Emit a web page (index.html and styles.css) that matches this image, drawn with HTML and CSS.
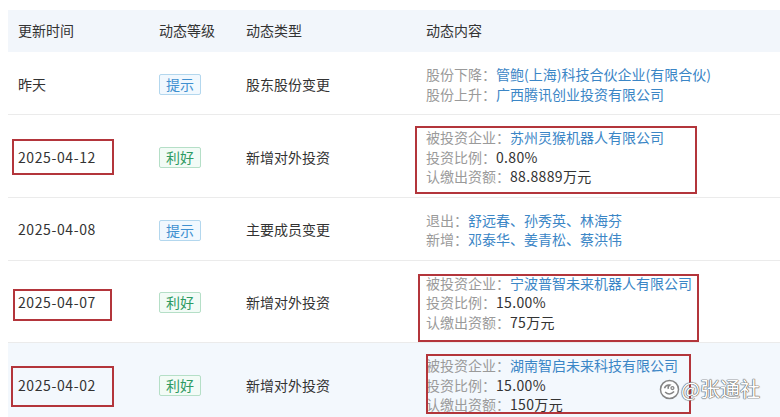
FILE: index.html
```html
<!DOCTYPE html>
<html lang="zh-CN">
<head>
<meta charset="utf-8">
<title>动态</title>
<link rel="stylesheet" href="styles.css">
</head>
<body>
<div class="table">
  <div class="row head">
    <div class="c">更新时间</div>
    <div class="c">动态等级</div>
    <div class="c">动态类型</div>
    <div class="c">动态内容</div>
  </div>

  <div class="row">
    <div class="c mid">昨天</div>
    <div class="c mid"><span class="tag tip">提示</span></div>
    <div class="c mid">股东股份变更</div>
    <div class="c">
      <div class="ln"><span class="lb">股份下降：</span><span class="lk">管鲍(上海)科技合伙企业(有限合伙)</span></div>
      <div class="ln"><span class="lb">股份上升：</span><span class="lk">广西腾讯创业投资有限公司</span></div>
    </div>
  </div>

  <div class="row">
    <div class="c mid"><span class="date mk mk1">2025-04-12</span></div>
    <div class="c mid"><span class="tag good">利好</span></div>
    <div class="c mid">新增对外投资</div>
    <div class="c">
      <div class="box bx1">
        <div class="ln"><span class="lb">被投资企业：</span><span class="lk">苏州灵猴机器人有限公司</span></div>
        <div class="ln"><span class="lb">投资比例：</span><span class="vl">0.80%</span></div>
        <div class="ln"><span class="lb">认缴出资额：</span><span class="vl">88.8889万元</span></div>
      </div>
    </div>
  </div>

  <div class="row">
    <div class="c mid"><span class="date">2025-04-08</span></div>
    <div class="c mid"><span class="tag tip">提示</span></div>
    <div class="c mid">主要成员变更</div>
    <div class="c">
      <div class="ln"><span class="lb">退出：</span><span class="lk">舒远春、孙秀英、林海芬</span></div>
      <div class="ln"><span class="lb">新增：</span><span class="lk">邓泰华、姜青松、蔡洪伟</span></div>
    </div>
  </div>

  <div class="row">
    <div class="c mid"><span class="date mk mk2">2025-04-07</span></div>
    <div class="c mid"><span class="tag good">利好</span></div>
    <div class="c mid">新增对外投资</div>
    <div class="c">
      <div class="box bx2">
        <div class="ln"><span class="lb">被投资企业：</span><span class="lk">宁波普智未来机器人有限公司</span></div>
        <div class="ln"><span class="lb">投资比例：</span><span class="vl">15.00%</span></div>
        <div class="ln"><span class="lb">认缴出资额：</span><span class="vl">75万元</span></div>
      </div>
    </div>
  </div>

  <div class="row hover">
    <div class="c mid"><span class="date mk mk3">2025-04-02</span></div>
    <div class="c mid"><span class="tag good">利好</span></div>
    <div class="c mid">新增对外投资</div>
    <div class="c">
      <div class="box bx3">
        <div class="ln"><span class="lb">被投资企业：</span><span class="lk">湖南智启未来科技有限公司</span></div>
        <div class="ln"><span class="lb">投资比例：</span><span class="vl">15.00%</span></div>
        <div class="ln"><span class="lb">认缴出资额：</span><span class="vl">150万元</span></div>
      </div>
    </div>
  </div>
</div>

<div class="wm">
  <svg class="wm-ico" width="21" height="21" viewBox="0 0 20 20">
    <circle cx="10" cy="10" r="8.6" fill="#fff" stroke="#858585" stroke-width="1.4"/>
    <path d="M5.2 8.8 Q6.5 5.2 10.2 5.8 Q8 7.4 9 9.4" fill="none" stroke="#858585" stroke-width="1.4"/>
    <circle cx="12.8" cy="8.6" r="1.4" fill="none" stroke="#858585" stroke-width="1.2"/>
    <path d="M5.8 12.4 Q10 16.4 14.4 12" fill="none" stroke="#858585" stroke-width="1.4"/>
  </svg>
  <span class="wm-txt">@张通社</span>
</div>
</body>
</html>
```

FILE: styles.css
```css
html, body {
  margin: 0;
  padding: 0;
  background: #ffffff;
}
body {
  font-family: "Noto Sans CJK SC", "Microsoft YaHei", sans-serif;
  font-size: 14px;
  color: #333333;
  position: relative;
  width: 780px;
  height: 417px;
  overflow: hidden;
}
.table {
  margin: 10px 0 0 8px;
}
.row {
  display: grid;
  grid-template-columns: 141px 87px 180px 1fr;
  padding: 13px 0 10px;
  border-bottom: 1px solid #ebebeb;
  line-height: 19.5px;
}
.row.head {
  padding: 0;
  height: 42px;
  align-items: center;
  background: #f2f6fb;
  border-bottom: none;
  color: #333;
}
.row.hover {
  background: #f3f8fd;
  border-bottom: none;
  padding-bottom: 20px;
}
.c {
  padding-left: 10px;
  white-space: nowrap;
}
.mid {
  align-self: center;
}
.tag {
  display: inline-block;
  height: 21px;
  box-sizing: border-box;
  line-height: 19px;
  padding: 0 6px;
  border: 1px solid;
  border-radius: 2px;
  font-size: 14px;
}
.tip {
  color: #3f90d0;
  border-color: #b3d7ee;
  background: #f1f8fe;
}
.good {
  color: #2e9a62;
  border-color: #b5dfc7;
  background: #f2fbf6;
}
.lb { color: #9a9a9a; }
.lk { color: #3b86c6; }
.vl { color: #333333; letter-spacing: 0.35px; }

.date {
  display: inline-block;
  letter-spacing: 0.6px;
}
.mk, .box { position: relative; }
.mk::after, .box::after {
  content: "";
  position: absolute;
  border: 2px solid #b3353b;
  pointer-events: none;
}
.mk1::after { left: -6px; top: -9px; right: -18px; bottom: -8px; }
.mk2::after { left: -5px; top: -4px; right: -16px; bottom: -8px; }
.mk3::after { left: -7px; top: -10px; right: -18px; bottom: -12px; }

.bx1::after { left: -11px; top: -2px; width: 278px; height: 64px; }
.bx2::after { left: -8px; top: 0; width: 277px; height: 64px; }
.bx3::after { left: 0; top: -2px; width: 261px; height: 56px; }

.wm {
  position: absolute;
  left: 659px;
  top: 377px;
  display: flex;
  align-items: center;
  gap: 1px;
}
.wm-txt {
  font-family: "Noto Sans CJK SC", sans-serif;
  font-size: 20px;
  line-height: 24px;
  color: #ffffff;
  text-shadow: 0 0 1px #666, 0 0 1px #666, 0 0 1px #666, 0 0 1px #666;
}
```
